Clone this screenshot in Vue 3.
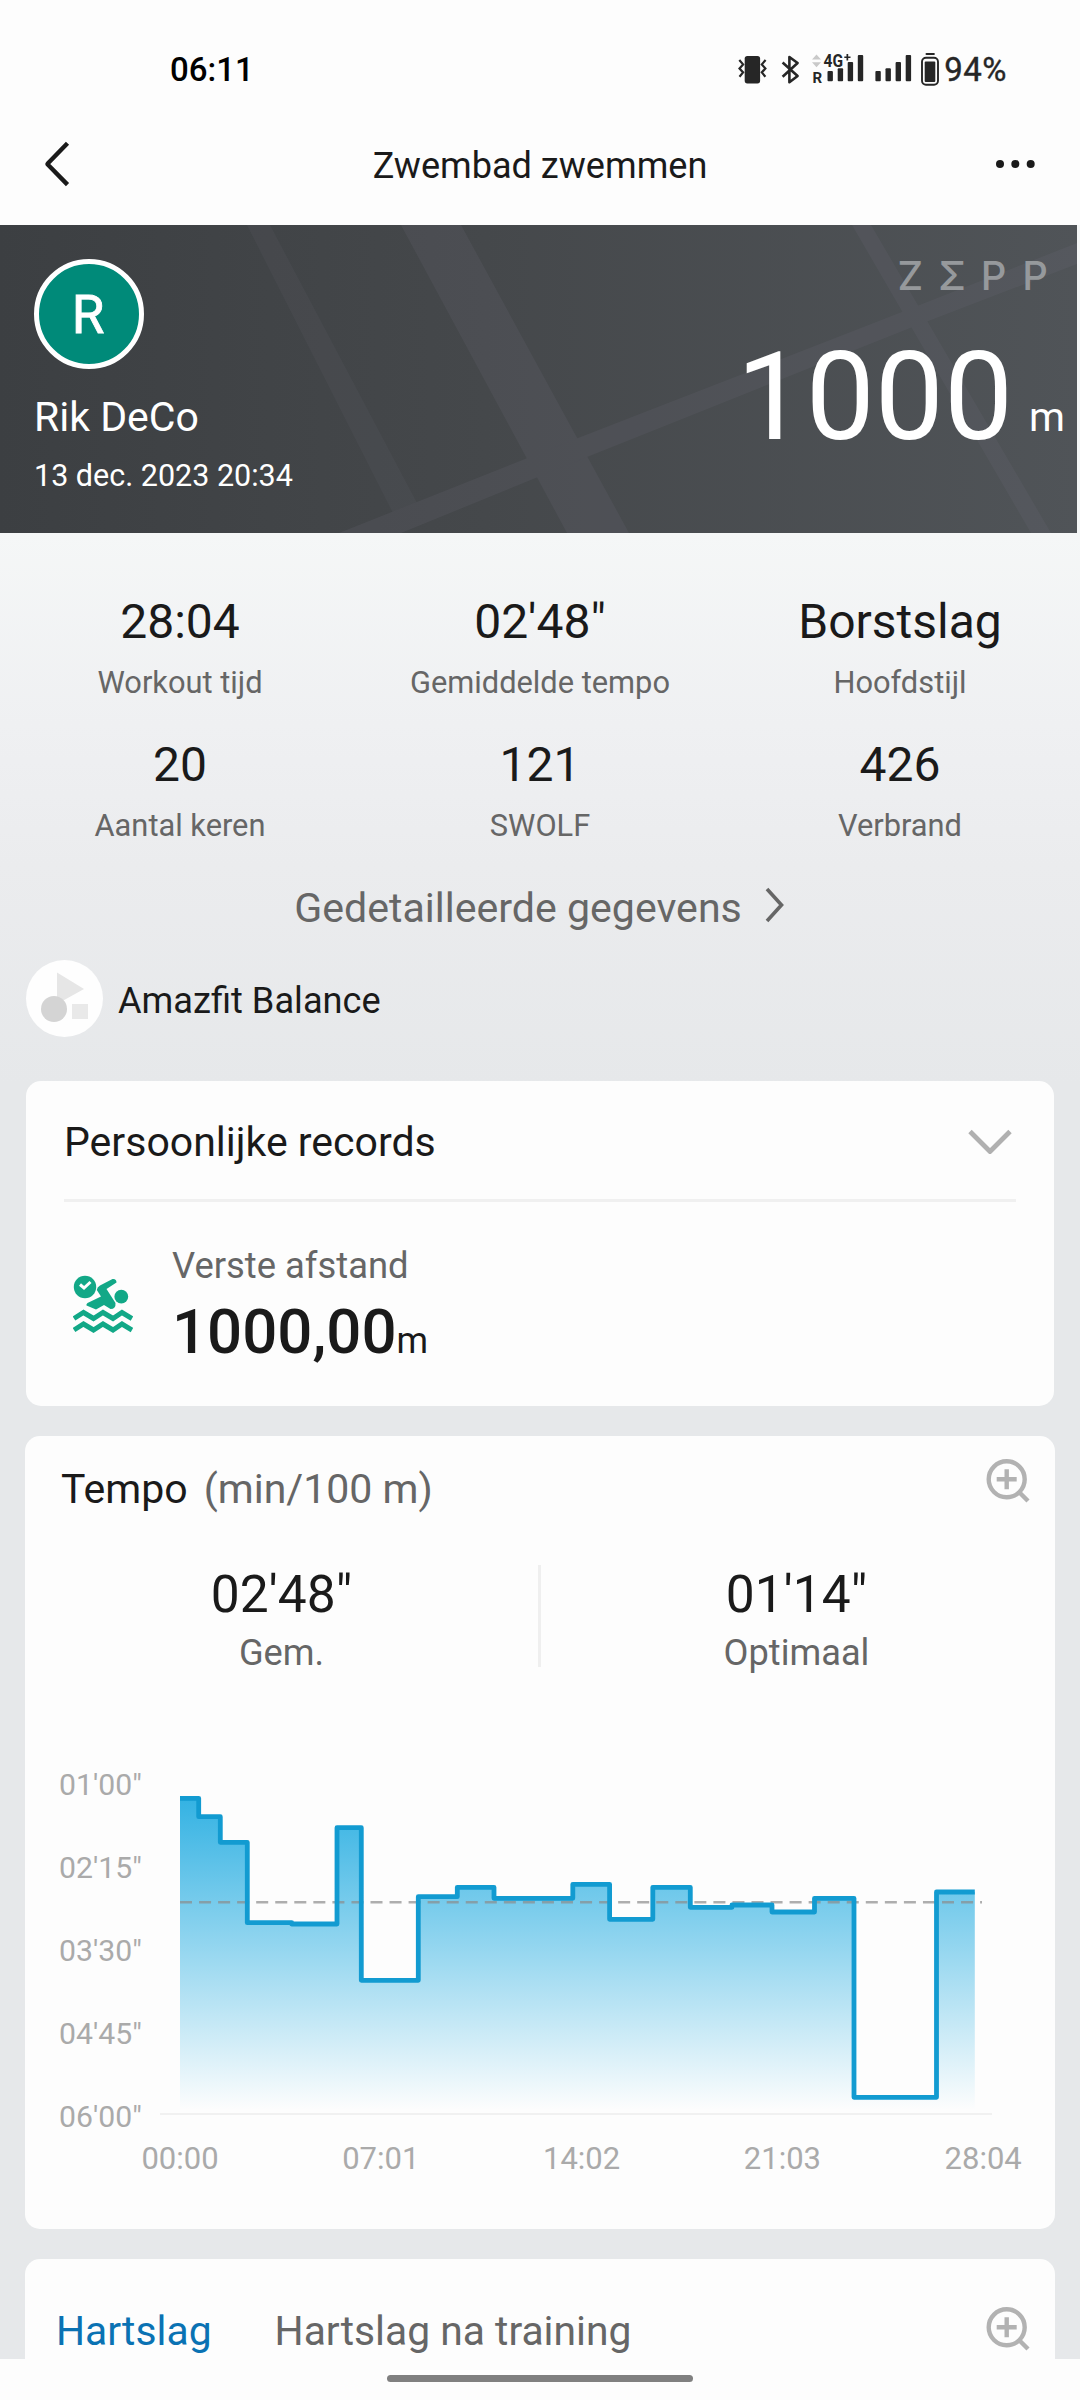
<script setup>
const metrics = [
  { value: '28:04', label: 'Workout tijd' },
  { value: '02\'48"', label: 'Gemiddelde tempo' },
  { value: 'Borstslag', label: 'Hoofdstijl' },
  { value: '20', label: 'Aantal keren' },
  { value: '121', label: 'SWOLF' },
  { value: '426', label: 'Verbrand' },
]

const paceStats = [
  { value: '02\'48"', label: 'Gem.' },
  { value: '01\'14"', label: 'Optimaal' },
]

const yTicks = ['01\'00"', '02\'15"', '03\'30"', '04\'45"', '06\'00"'].map((label, i) => ({
  label,
  y: 54.5 + i * 83,
}))

const xTicks = ['00:00', '07:01', '14:02', '21:03', '28:04'].map((label, i) => ({
  label,
  x: 155 + i * 200.8,
}))

// Each lap: right edge and height of its step in chart units
const laps = [
  [173.7, 58.3], [195.3, 76.7], [222.3, 102.3], [266.7, 182.7], [312, 184],
  [336.3, 87.7], [393.3, 240.3], [432.3, 156.7], [469, 147.3], [547.8, 158.3],
  [584.6, 144.3], [627.8, 179.3], [665.3, 147.3], [707, 167.3], [747, 165],
  [789.5, 172], [829, 158.3], [911.5, 357.3], [949.8, 152],
]
const startX = 155
const floorY = 372
const line = `M${startX} ${laps[0][1]}` + laps.map(([x, y]) => `V${y}H${x}`).join('')
const area = `${line}V${floorY}H${startX}Z`
</script>

<template>
  <div class="screen">
    <header class="status">
      <span class="clock">06:11</span>
      <div class="status-right">
        <svg class="status-icons" width="204" height="36" viewBox="737 50 204 36">
          <g fill="#262626">
            <rect x="744.7" y="55" width="15.4" height="27.4" rx="2.6" />
            <g fill="none" stroke="#262626" stroke-width="2.2">
              <path d="M739.3 59l3.8 4.4-3.6 4 3.6 4-3.6 4.4M765.6 59l-3.8 4.4 3.6 4-3.6 4 3.6 4.4" />
              <path d="M782.6 61.5l15 13.5-8.200 6.200V56l8.200 6-15 13.800" stroke-width="2.600" stroke-linejoin="round" />
            </g>
            <path d="M812 58.500l4.500-5 4.500 5zM812 61.200l4.500 5 4.500-5z" fill="#c9c9c9" />
            <text x="812.400" y="81.600" class="tiny-r">R</text>
            <text x="823.600" y="66" class="tiny-g" textLength="19.500" lengthAdjust="spacingAndGlyphs">4G</text>
            <path d="M844.300 55.400h2.200V53h1.700v2.400h2.300v1.700h-2.300v2.400h-1.700v-2.400h-2.200z" />
            <rect x="827.500" y="70" width="5.400" height="10.300" rx="1" />
            <rect x="837.700" y="67.200" width="5.400" height="13.100" rx="1" />
            <rect x="847.700" y="61" width="5.400" height="19.300" rx="1" />
            <rect x="857.800" y="54" width="5.400" height="26.300" rx="1" />
            <rect x="875.400" y="70" width="5.400" height="10.300" rx="1" />
            <rect x="885.500" y="67.200" width="5.400" height="13.100" rx="1" />
            <rect x="895.600" y="61" width="5.400" height="19.300" rx="1" />
            <rect x="905.700" y="54" width="5.400" height="26.300" rx="1" />
            <rect x="925.500" y="52" width="9.400" height="2" rx="1" />
            <rect x="922" y="56.800" width="16" height="27" rx="4" fill="none" stroke="#262626" stroke-width="1.900" />
            <rect x="924.700" y="60.600" width="10.600" height="20.400" rx="1" />
          </g>
        </svg>
        <span class="battery">94%</span>
      </div>
    </header>

    <nav class="nav">
      <svg width="30" height="50" viewBox="0 0 30 50">
        <path d="M25.500 4.200L6 24.200c-.6.6-.6 1 0 1.600L25.500 45.600" fill="none" stroke="#1a1a1a" stroke-width="4.400" />
      </svg>
      <h1>Zwembad zwemmen</h1>
      <svg width="44" height="12" viewBox="0 0 44 12" fill="#1a1a1a">
        <circle cx="6" cy="6" r="4" /><circle cx="21.300" cy="6" r="4" /><circle cx="36.700" cy="6" r="4" />
      </svg>
    </nav>

    <main class="content">
      <section class="hero">
        <svg class="hero-map" width="1077" height="308" viewBox="0 225 1077 308">
          <path d="M401 225H461L629 533H567Z" />
          <path d="M247 225H270L417 503L393 513Z" opacity=".65" />
          <path d="M339 533L578 438L902 312L1077 243V264L910 328L587 457L401 533Z" />
          <path d="M852 225H871L1051 533H1031Z" />
        </svg>
        <div class="who">
          <div class="avatar">R</div>
          <div class="name">Rik DeCo</div>
          <div class="date">13 dec. 2023 20:34</div>
        </div>
        <div class="total">
          <div class="brand"><span>Z</span><span>Σ</span><span>P</span><span>P</span></div>
          <div class="distance"><span class="num">1000</span><span class="unit">m</span></div>
        </div>
      </section>

      <section class="metrics">
        <div v-for="m in metrics" :key="m.label" class="metric">
          <div class="metric-value">{{ m.value }}</div>
          <div class="metric-label">{{ m.label }}</div>
        </div>
      </section>

      <a class="details">
        <span>Gedetailleerde gegevens</span>
        <svg width="24" height="40" viewBox="0 0 24 40">
          <path d="M4 4L18.500 20L4 36" fill="none" stroke="#666" stroke-width="3.600" />
        </svg>
      </a>

      <div class="device">
        <svg width="77" height="77" viewBox="0 0 77 77">
          <circle cx="38.500" cy="38.500" r="38.500" fill="#fefefe" />
          <path d="M31 12.500L58 29L31 44Z" fill="#e6e6e6" />
          <rect x="46" y="44" width="16" height="15" fill="#e9e9e9" />
          <circle cx="28" cy="49" r="13" fill="#d4d4d4" />
        </svg>
        <span>Amazfit Balance</span>
      </div>

      <section class="card records">
        <div class="records-head">
          <h2>Persoonlijke records</h2>
          <svg width="48" height="30" viewBox="0 0 48 30">
            <path d="M4 4.500L24 24.500L44 4.500" fill="none" stroke="#b0b0b0" stroke-width="4.800" stroke-linejoin="round" />
          </svg>
        </div>
        <div class="record">
          <svg width="60" height="60" viewBox="0 0 60 60" fill="#12a887">
            <circle cx="12" cy="12" r="11.200" />
            <path d="M7 9.500L11 13L17.500 7" fill="none" stroke="#fefefe" stroke-width="3" />
            <circle cx="48.300" cy="21.700" r="6.900" />
            <path d="M39.500 4Q43.500 3.500 43.500 7.500L33.500 14L42.500 28Q43 34 37.500 34L31 30L23 34.500L13.500 30.500Q13 29 14.500 28L28 21.500L23.800 15Q24 12 27 10.500Z" />
            <g fill="none" stroke="#12a887" stroke-width="5">
              <path d="M1 43.500L10.500 37.500L20.500 43.500L30 37.500L40 43.500L49 37.500L59 43.500" />
              <path d="M1 55L10.500 49L20.500 55L30 49L40 55L49 49L59 55" />
            </g>
          </svg>
          <div>
            <div class="record-label">Verste afstand</div>
            <div class="record-value">1000,00<small>m</small></div>
          </div>
        </div>
      </section>

      <section class="card pace">
        <div class="pace-head">
          <h2>Tempo <span>(min/100 m)</span></h2>
          <svg class="zoom" width="46" height="46" viewBox="0 0 46 46">
            <g fill="none" stroke="#b2b2b2" stroke-width="4.400">
              <circle cx="21.700" cy="21.300" r="18" />
              <path d="M21.700 11.300V31.300M11.700 21.300H31.700M34 34L43 43" />
            </g>
          </svg>
        </div>
        <div class="pace-stats">
          <div v-for="s in paceStats" :key="s.label" class="pace-stat">
            <div class="pace-value">{{ s.value }}</div>
            <div class="pace-label">{{ s.label }}</div>
          </div>
        </div>
        <svg class="chart" width="1030" height="470" viewBox="0 0 1030 470">
          <defs>
            <linearGradient id="fade" gradientUnits="userSpaceOnUse" x1="0" y1="58" x2="0" y2="370">
              <stop offset="0" stop-color="#33b2e3" />
              <stop offset="1" stop-color="#33b2e3" stop-opacity="0" />
            </linearGradient>
          </defs>
          <path :d="area" fill="url(#fade)" />
          <path d="M155 162.300H957" stroke="#8c8c8c" stroke-opacity=".7" stroke-width="2.400" stroke-dasharray="12 7.050" />
          <path d="M135 374H967" stroke="#f1f1f1" stroke-width="2" />
          <path :d="line" fill="none" stroke="#129bd1" stroke-width="4.800" stroke-linejoin="round" />
          <text v-for="t in yTicks" :key="t.label" class="y-tick" x="34" :y="t.y">{{ t.label }}</text>
          <text v-for="t in xTicks" :key="t.label" :x="t.x" y="428.700" text-anchor="middle">{{ t.label }}</text>
        </svg>
      </section>

      <section class="card heart">
        <div class="tabs">
          <span class="active">Hartslag</span>
          <span>Hartslag na training</span>
        </div>
        <svg class="zoom" width="46" height="46" viewBox="0 0 46 46">
          <g fill="none" stroke="#b2b2b2" stroke-width="4.400">
            <circle cx="21.700" cy="21.300" r="18" />
            <path d="M21.700 11.300V31.300M11.700 21.300H31.700M34 34L43 43" />
          </g>
        </svg>
      </section>
    </main>

    <footer class="gesture"><i></i></footer>
  </div>
</template>

<style>
body { margin: 0; background: #fdfdfd; }
</style>

<style scoped>
* { box-sizing: border-box; }
.screen {
  width: 1080px;
  height: 2400px;
  overflow: hidden;
  background: #fdfdfd;
  color: #1a1a1a;
  font-family: Roboto, "Liberation Sans", sans-serif;
  display: flex;
  flex-direction: column;
}
h1, h2 { margin: 0; font-weight: 400; }
svg { display: block; flex: none; }

.status {
  flex: none;
  height: 102px;
  padding: 37px 73px 0 170px;
  display: flex;
  align-items: center;
  justify-content: space-between;
}
.clock { font-size: 33px; font-weight: 500; color: #000; line-height: 40px; }
.status-right { display: flex; align-items: center; gap: 3px; }
.status-icons { margin-top: -2px; }
.battery { font-size: 33px; line-height: 40px; color: #262626; letter-spacing: .5px; -webkit-text-stroke: .4px #262626; }
.tiny-r { font-size: 15px; font-weight: 700; }
.tiny-g { font-size: 18px; font-weight: 700; }

.nav {
  flex: none;
  height: 123px;
  padding: 0 42px 0 42px;
  display: grid;
  grid-template-columns: 44px 1fr 44px;
  align-items: center;
}
.nav h1 { text-align: center; font-size: 36.100px; line-height: 44px; padding-top: 4px; }

.content {
  flex: none;
  height: 2134px;
  overflow: hidden;
  background: linear-gradient(#f5f7f7 308px, #eff0f2 500px, #ebecee 640px, #e6e8ea 860px);
}
.hero {
  width: 1077px;
  height: 308px;
  position: relative;
  display: flex;
  justify-content: space-between;
  color: #fff;
  background: linear-gradient(90deg, #3c3f42, #45484b 45%, #505458);
}
.hero-map { position: absolute; inset: 0; fill: #6c6a78; opacity: .19; }
.who { position: relative; padding: 34px 0 0 34px; }
.avatar {
  width: 110px;
  height: 110px;
  border: 5px solid #fff;
  border-radius: 50%;
  background: #008a79;
  font-size: 53px;
  line-height: 102px;
  text-align: center;
  text-indent: -2px;
  -webkit-text-stroke: .8px #fff;
}
.name { margin-top: 24px; font-size: 41px; line-height: 48px; }
.date { margin-top: 15px; font-size: 30.500px; line-height: 40px; }
.total { position: relative; padding: 31px 12px 0 0; display: flex; flex-direction: column; align-items: flex-end; }
.brand { display: flex; margin-right: 9px; color: #96999c; font: 500 40px/40px Inter, sans-serif; }
.brand span { width: 41.600px; text-align: center; }
.distance { display: flex; gap: 16px; margin-top: 41px; }
.num { font-size: 123px; line-height: 120px; }
.unit { font-size: 41px; line-height: 48px; margin-top: 56px; }

.metrics {
  padding-top: 60.500px;
  display: grid;
  grid-template-columns: repeat(3, 1fr);
  row-gap: 33.500px;
  text-align: center;
}
.metric-value { font-size: 48px; line-height: 56px; }
.metric-label { margin-top: 13.500px; font-size: 30.800px; line-height: 40px; color: #666; }

.details {
  margin-top: 37px;
  display: flex;
  justify-content: center;
  gap: 21px;
  padding-left: 1px;
  font-size: 41.100px;
  line-height: 50px;
  color: #666;
}
.details svg { margin-top: 2px; }

.device { margin: 27px 0 44px 26px; height: 77px; display: flex; align-items: center; gap: 15px; font-size: 36.200px; }
.device span { padding-top: 4px; }

.card { background: #fdfdfd; border-radius: 15px; margin: 0 25px; }
.card h2 { font-size: 41px; line-height: 50px; }

.records { height: 325px; margin: 0 26px 30px; padding: 0 38px; }
.records-head { height: 121px; border-bottom: 3px solid #f0f0f0; display: flex; justify-content: space-between; align-items: center; }
.records-head h2 { padding-top: 4px; }
.records-head svg { margin: 4px 2px 0 0; }
.record { padding: 41.500px 0 0 9px; display: flex; gap: 39px; }
.record > svg { margin-top: 31.500px; }
.record-label { font-size: 36.400px; line-height: 44px; color: #666; }
.record-value { margin-top: 12.500px; font-size: 61.800px; font-weight: 500; line-height: 64px; }
.record-value small { font-size: 36px; font-weight: 400; }

.pace { height: 793px; margin-bottom: 30px; padding-top: 21px; }
.pace-head { display: flex; justify-content: space-between; padding: 0 24px 0 36px; }
.pace-head h2 { padding-top: 7px; }
.pace-head h2 span { color: #666; margin-left: 6px; }
.zoom { margin-top: 1px; }
.pace-stats { margin-top: 50.500px; display: grid; grid-template-columns: 513px 1fr; text-align: center; height: 108px; }
.pace-stat + .pace-stat { background: linear-gradient(#efefef, #efefef) 0 0 / 3px 102px no-repeat; }
.pace-value { font-size: 51.500px; line-height: 60px; }
.pace-label { margin-top: 8px; font-size: 36.200px; line-height: 40px; color: #666; }
.chart { margin-top: 67.500px; fill: #aaa; font-size: 31px; }
.y-tick { font-size: 30.200px; }

.heart { height: 130px; display: flex; justify-content: space-between; padding: 46px 24px 0 31px; border-radius: 15px 15px 0 0; }
.tabs { display: flex; gap: 63px; padding-top: 1px; font-size: 40.800px; line-height: 50px; color: #666; }
.tabs .active { color: #0a72b3; }

.gesture { flex: 1; padding-top: 16px; background: #fdfdfd; display: flex; justify-content: center; }
.gesture i { width: 306px; height: 7px; border-radius: 4px; background: #808080; }
</style>
